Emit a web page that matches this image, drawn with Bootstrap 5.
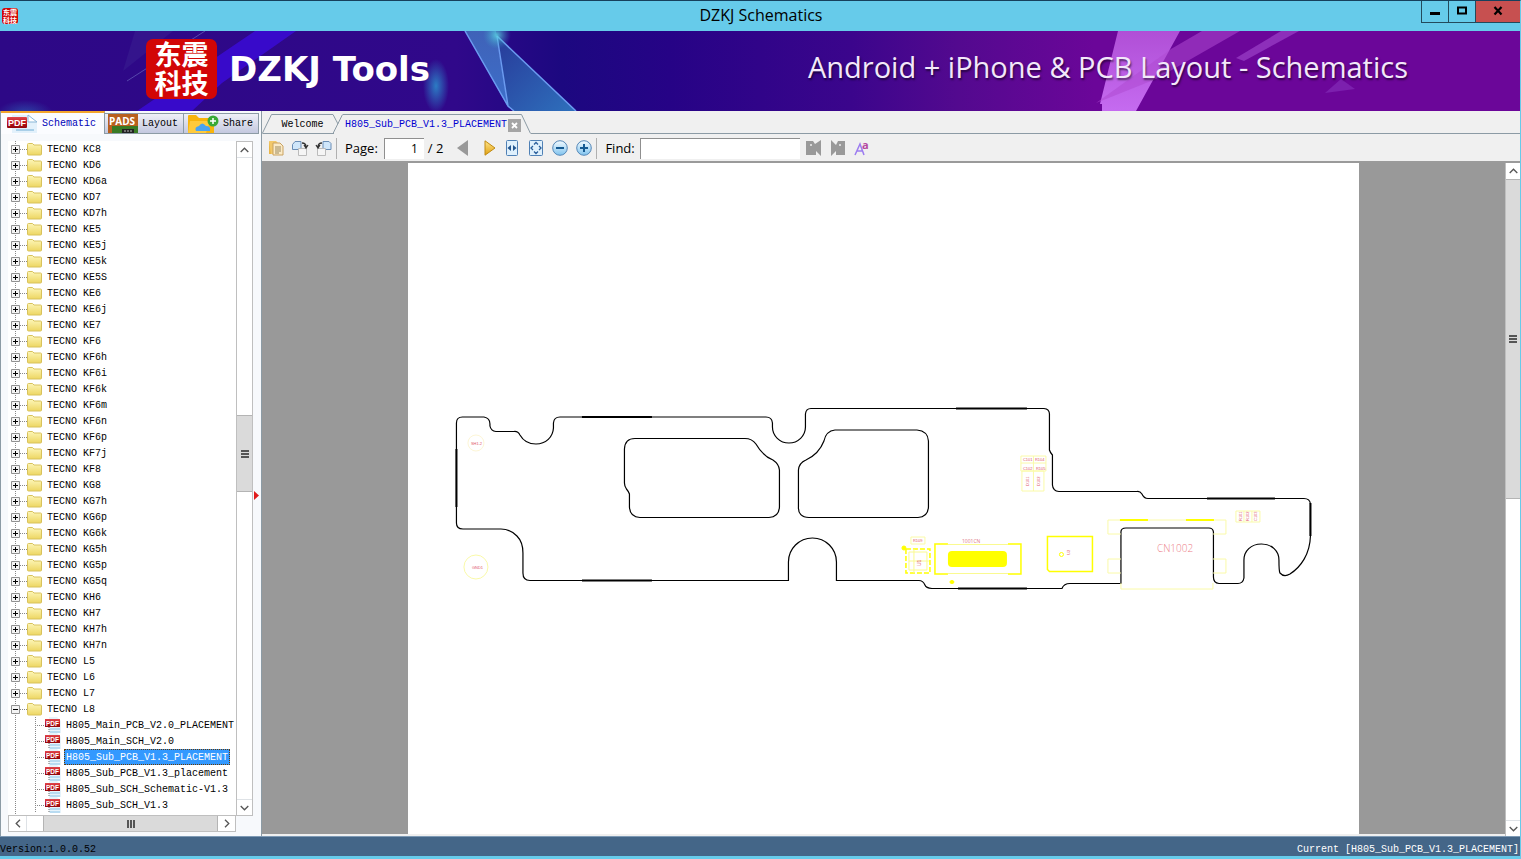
<!DOCTYPE html>
<html lang="en">
<head>
<meta charset="utf-8">
<meta name="viewport" content="width=device-width, initial-scale=1">
<title>DZKJ Schematics</title>
<link href="https://cdn.jsdelivr.net/npm/bootstrap@5.3.0/dist/css/bootstrap.min.css" rel="stylesheet">
<style>
  :root { --cyan:#66cbea; --edge:#8c9ba5; --mono:"Liberation Mono","Noto Sans CJK SC",monospace; --ui:"Open Sans","Noto Sans",sans-serif; }
  body { font:10px/16px var(--mono); color:#000; background:#f0f0f0; }
  button { font:inherit; color:inherit; background:none; border:0; padding:0; }
  .window { border-top:1px solid #16405c; border-right:1px solid var(--cyan); border-bottom:3px solid var(--cyan); }
  /* title bar */
  .titlebar { height:30px; background:var(--cyan); padding-left:2px; }
  .titlebar h1 { font:16px/28px var(--ui); }
  .side { width:100px; }
  .seal { background:#d20606; color:#fff; font-family:"Noto Sans CJK SC",sans-serif; font-weight:700; text-align:center; }
  .seal-sm { width:16px; height:16px; border-radius:3px; font-size:7px; line-height:8px; }
  .winbtns { height:22px; border:1px solid #234a5c; border-top:0; border-right:0; }
  .winbtns button { width:27px; border-right:1px solid #234a5c; }
  .winbtns button:last-child { width:44px; background:#c75050; border:0; }
  /* banner */
  .banner { height:80px; background:linear-gradient(90deg,#2d0886 0,#30088a 30%,#1c0880 37%,#260386 44%,#3b058c 56%,#53098f 63%,#6b0699 72%,#6b0699 100%); }
  .banner-content { padding:0 112px 4px 146px; }
  .seal-lg { width:71px; height:60px; border-radius:7px; font-size:27px; line-height:29px; }
  .brand { font:700 34px/40px "DejaVu Sans",sans-serif; color:#fff; margin-left:12px; }
  .slogan { font:29px/36px var(--ui); color:#f3e8fa; text-shadow:1px 2px 2px #0008; padding-bottom:4px; }
  /* side panel */
  .panel { width:262px; border-right:1px solid var(--edge); border-left:1px solid var(--edge); background:#f7f9fc; }
  .tabrow { height:23px; }
  .sidetab { height:21px; border:1px solid var(--edge); border-left:0; background:linear-gradient(#eff0f7,#c3c8df); font-size:10px; padding:0 5px 0 3px; }
  .sidetab span { padding-top:1px; }
  .sidetab.active { height:23px; width:104px; border-top:2px solid #f3a52c; border-bottom:0; background:#fbfcff; color:#0000b8; padding:0 8px 0 6px; }
  .treebox { margin:7px 8px 4px 7px; }
  .tree { background:#fff; }
  .tree li { height:16px; white-space:nowrap; background:repeating-linear-gradient(#888 0 1px,transparent 1px 2px) 7px 0/1px 100% no-repeat; padding-left:3px; }
  .tree li > * { flex-shrink:0; }
  .tree li.leaf { background:repeating-linear-gradient(#888 0 1px,transparent 1px 2px) 7px 0/1px 100% no-repeat,repeating-linear-gradient(#888 0 1px,transparent 1px 2px) 27px 0/1px 100% no-repeat; padding-left:27px; }
  .tree .toggle { width:9px; height:9px; line-height:0; }
  .dots { width:7px; height:1px; background:repeating-linear-gradient(90deg,#888 0 1px,transparent 1px 2px); }
  .leaf .dots { width:10px; }
  .tree .label { padding:2px 2px 0; margin-left:3px; line-height:14px; }
  .leaf .label { margin-left:2px; }
  .label.sel { background:#3399ff; color:#fff; outline:1px dotted #6b3a00; outline-offset:-1px; }
  /* scrollbars */
  .sb { background:#fff; border:1px solid #bfbfbf; }
  .sb-v { width:17px; }
  .sb-v button, .sb-v .thumb { width:100%; display:flex; align-items:center; justify-content:center; }
  .sb-v button { height:16px; }
  .sb-v .thumb { background:#dadada; border:1px solid #b4b4b4; border-width:1px 0; }
  .sb-h { height:17px; }
  .sb-h button { width:17px; }
  .sb-h .thumb { background:#dadada; border:1px solid #b4b4b4; border-width:0 1px; }
  /* documents */
  .doctabs { height:23px; }
  .doctabs .line { border-bottom:1px solid var(--edge); }
  .doctabs button { border-top:1px solid var(--edge); height:20px; white-space:nowrap; padding-top:1px; }
  .doctabs .first { width:61px; border-bottom:1px solid var(--edge); }
  .doctabs .current { width:178px; color:#0000d0; padding-left:2px; }
  .overlap { margin-left:-6px; }
  .close-x { width:13px; height:13px; background:#a5a5a5; }
  .toolbar { height:29px; border-bottom:2px solid #9a9a9a; padding:1px 0 0 2px; font:13px/20px var(--ui); }
  .toolbar > button { width:24px; height:20px; line-height:0; }
  .toolbar > .next { width:21px; }
  .toolbar input { height:21px; border:1px solid #8f8f8f; border-right:0; border-bottom:0; background:#fff; padding:0 6px; font:12px/18px var(--ui); border-radius:0; }
  .sep { width:1px; height:21px; background:#b0b0b0; }
  .pageno { width:40px; text-align:right; margin:0 4px 0 6px; }
  .find { width:160px; margin:0 2px 0 5px; }
  .canvas { background:#999; margin-bottom:2px; }
  .sheet { width:76.5%; background:#fff; }
  .sb-doc { width:15px; border-width:0 0 0 1px; }
  .sb-doc .thumb { height:320px; }
  .track-a { flex:258 0 0; } .thumb-a { flex:76 0 0; } .track-b { flex:308 0 0; }
  .arrowcol { width:0; position:relative; }
  .status { height:20px; background:#446688; border-top:1px solid #7e9ab5; padding:6px 1px 0 0; line-height:13px; }
</style>
</head>
<body>
<svg class="position-absolute" width="0" height="0" aria-hidden="true">
  <linearGradient id="gFolder" x2="0" y2="1"><stop stop-color="#fdf6b8"/><stop offset="1" stop-color="#edd662"/></linearGradient>
  <linearGradient id="gRed" x2="0" y2="1"><stop stop-color="#e0474d"/><stop offset=".5" stop-color="#c1151c"/><stop offset="1" stop-color="#8f070c"/></linearGradient>
  <linearGradient id="gGold" x2="0" y2="1"><stop stop-color="#ffe58a"/><stop offset="1" stop-color="#e0a010"/></linearGradient>
  <linearGradient id="gBlue" x2="0" y2="1"><stop stop-color="#f4fbff"/><stop offset="1" stop-color="#7fc3ee"/></linearGradient>
  <symbol id="folder" viewBox="0 0 15 14"><path d="M.5 2.500q0-1 1-1h4l1.500 1.500h6.500q1 0 1 1v8q0 1-1 1h-12q-1 0-1-1z" fill="url(#gFolder)" stroke="#d8c25c"/></symbol>
  <symbol id="pdf" viewBox="0 0 17 16"><path d="M4 0h8l4 4v12H4z" fill="#e6f3fb"/><path d="M5 12h10M5 15h10" stroke="#a9d4ee" stroke-width="1.500"/><path d="M4 10v6" stroke="#666" stroke-dasharray="1 1"/><rect y="2" width="15" height="8" fill="url(#gRed)"/><text x="1" y="8.500" font-size="6.500" font-weight="700" font-family="Liberation Sans" fill="#fff">PDF</text></symbol>
  <symbol id="up" viewBox="0 0 9 6"><path d="M.7 5 4.500 1.200 8.300 5" fill="none" stroke="#555" stroke-width="1.300"/></symbol>
  <symbol id="down" viewBox="0 0 9 6"><path d="M.7 1 4.500 4.800 8.300 1" fill="none" stroke="#555" stroke-width="1.300"/></symbol>
  <symbol id="grip" viewBox="0 0 8 8"><path d="M0 1h8M0 4h8M0 7h8" stroke="#555" stroke-width="2"/></symbol>
</svg>

<div class="window vh-100 d-flex flex-column overflow-hidden">
  <header class="titlebar d-flex justify-content-between flex-shrink-0">
    <div class="side d-flex align-items-center"><div class="seal seal-sm">东震<br>科技</div></div>
    <h1 class="m-0">DZKJ Schematics</h1>
    <div class="side d-flex justify-content-end align-items-start">
      <div class="winbtns d-flex">
        <button aria-label="Minimize"><svg width="12" height="12"><path d="M1 8.500h10" stroke="#000" stroke-width="3"/></svg></button>
        <button aria-label="Maximize"><svg width="12" height="12"><path d="M2 2.500h8v6H2z" fill="none" stroke="#000" stroke-width="2"/></svg></button>
        <button aria-label="Close"><svg width="12" height="12"><path d="M2.500 2 9.500 9.500M9.500 2 2.500 9.500" stroke="#000" stroke-width="2.200"/></svg></button>
      </div>
    </div>
  </header>

  <div class="banner position-relative flex-shrink-0">
    <svg class="position-absolute top-0 start-0 w-100 h-100" viewBox="0 0 1520 80" preserveAspectRatio="none" aria-hidden="true">
      <defs>
        <linearGradient id="ray" x2="0" y2="1"><stop stop-color="#3f62b8"/><stop offset="1" stop-color="#3d6fca"/></linearGradient>
        <linearGradient id="ray2" x2="1" y2="1"><stop stop-color="#283a9a"/><stop offset="1" stop-color="#2e70bc"/></linearGradient>
        <linearGradient id="pink" x2="0" y2="1"><stop stop-color="#b04fd6"/><stop offset="1" stop-color="#c56bf0"/></linearGradient>
        <radialGradient id="glow"><stop stop-color="#2c7cc4"/><stop offset="1" stop-color="#2c7cc4" stop-opacity="0"/></radialGradient>
        <radialGradient id="star"><stop stop-color="#5ee0e8"/><stop offset="1" stop-color="#3aa0c8" stop-opacity="0"/></radialGradient>
      </defs>
      <path d="M255 0h41L222 52l-30 28h-55z" fill="#3c0be0" opacity=".75"/>
      <path d="M135 0h38l-50 40z" fill="#3f2a94" opacity=".35"/>
      <path d="M205 0 127 50" stroke="#5748ac"/>
      <ellipse cx="436" cy="55" rx="13" ry="27" fill="url(#glow)"/>
      <ellipse cx="25" cy="82" rx="28" ry="13" fill="url(#glow)" opacity=".5"/>
      <path d="M465 0h31l12 76z" fill="url(#ray)"/>
      <path d="M497 5 576 80h-62l-6-4z" fill="url(#ray2)"/>
      <path d="M465 0 508 75 514 80M497 5 508 75M497 5 576 80" fill="none" stroke="#6b9bf0" stroke-width="1.500"/>
      <circle cx="497" cy="4" r="14" fill="url(#star)" opacity=".8"/>
      <path d="M1118 0h62l-44 80h-34v-7h-2z" fill="url(#pink)"/>
      <path d="M1202 0h38l-84 48-60 24 75-54z" fill="#ae4bd2" opacity=".55"/>
      <path d="M1281 0h18l-55 30-8-3z" fill="#8d2fba"/>
      <path d="m1341 48 14 10-30 4z" fill="#7c20ae"/>
    </svg>
    <div class="banner-content position-relative h-100 d-flex align-items-center">
      <div class="seal seal-lg">东震<br>科技</div>
      <div class="brand">DZKJ Tools</div>
      <div class="slogan ms-auto text-nowrap">Android + iPhone &amp; PCB Layout - Schematics</div>
    </div>
  </div>

  <main class="d-flex flex-grow-1 overflow-hidden">
    <aside class="panel d-flex flex-column flex-shrink-0">
      <div class="tabrow d-flex align-items-end" role="tablist">
        <button class="sidetab active d-flex align-items-center justify-content-between" role="tab">
          <svg width="32" height="19"><path d="M5 1h17l8 8v11H5z" fill="#e3f1fb"/><path d="M21 1v7h9z" fill="#fff" stroke="#8bb8d8"/><path d="M9 16h18" stroke="#a9cfe8" stroke-width="2"/><rect y="3" width="20" height="11" rx="1" fill="url(#gRed)"/><text x="1" y="12" font-size="9" font-weight="700" font-family="Liberation Sans" fill="#fff">PDF</text></svg>
          <span>Schematic</span></button>
        <button class="sidetab d-flex align-items-center gap-1" role="tab">
          <svg width="30" height="19"><path d="M0 0h30v19H0z" fill="#b8601e"/><path d="M4 12h26v7H4z" fill="#397a24"/><path d="M14 15h12v4H14z" fill="#222"/><path d="M16 17h8" stroke="#bbb" stroke-dasharray="2 1"/><text x="1" y="11" font-size="10" font-weight="700" font-family="Open Sans" fill="#fff">PADS</text></svg>
          <span>Layout</span></button>
        <button class="sidetab d-flex align-items-center gap-1" role="tab">
          <svg width="32" height="19"><path d="M1 2q0-1 1-1h7l3 3h15v15H1z" fill="#f8b40c"/><path d="M3 7h20l-4 12H1z" fill="#ffca3a"/><path d="M9 17q-2-4 3-5 3-5 7 0 5 0 4 5z" fill="#4aa3ef"/><circle cx="26" cy="7" r="5.500" fill="#39a935"/><path d="M26 4v6M23 7h6" stroke="#fff" stroke-width="1.500"/></svg>
          <span>Share</span></button>
      </div>
      <div class="treebox d-flex flex-grow-1 overflow-hidden">
        <div class="d-flex flex-column flex-grow-1 overflow-hidden">
          <ul class="tree list-unstyled m-0 flex-grow-1 overflow-hidden" id="tree"></ul>
          <div class="sb sb-h d-flex flex-shrink-0">
            <button aria-label="Scroll left"><svg width="6" height="9"><path d="M5 .7 1.200 4.500 5 8.300" fill="none" stroke="#555" stroke-width="1.300"/></svg></button>
            <div class="border-start px-2"></div>
            <div class="thumb flex-grow-1 d-flex align-items-center justify-content-center"><svg width="8" height="8"><path d="M1 0v8M4 0v8M7 0v8" stroke="#555" stroke-width="2"/></svg></div>
            <button aria-label="Scroll right"><svg width="6" height="9"><path d="M1 .7 4.800 4.500 1 8.300" fill="none" stroke="#555" stroke-width="1.300"/></svg></button>
          </div>
        </div>
        <div class="sb sb-v d-flex flex-column flex-shrink-0 mb-3">
          <button class="border-bottom" aria-label="Scroll up"><svg width="9" height="6"><use href="#up"/></svg></button>
          <div class="track-a"></div>
          <div class="thumb thumb-a"><svg width="8" height="8"><use href="#grip"/></svg></div>
          <div class="track-b"></div>
          <button class="border-top" aria-label="Scroll down"><svg width="9" height="6"><use href="#down"/></svg></button>
        </div>
      </div>
    </aside>
    <div class="arrowcol d-flex align-items-center"><svg class="position-absolute end-100" width="8" height="60"><path d="M0 47v9l5-4.500z" fill="#e01b1b"/></svg></div>

    <section class="d-flex flex-column flex-grow-1 overflow-hidden">
      <div class="doctabs d-flex align-items-end">
        <svg width="10" height="20"><path d="M0 19.500.5 19 9.500.5H10M.5 19.500H10" fill="none" stroke="#8c9ba5"/></svg>
        <button class="first">Welcome</button>
        <svg width="6" height="20"><path d="M0 .5 5 10M0 19.500h1" fill="none" stroke="#8c9ba5"/></svg>
        <svg class="overlap" width="10" height="20"><path d="M0 19.500 9.500.5" fill="none" stroke="#8c9ba5"/></svg>
        <button class="current d-flex align-items-center justify-content-between">
          <span>H805_Sub_PCB_V1.3_PLACEMENT</span>
          <span class="close-x d-flex"><svg width="13" height="13"><path d="m4 4 5 5m0-5-5 5" stroke="#fff" stroke-width="1.800"/></svg></span>
        </button>
        <svg width="10" height="20"><path d="M0 .5h.5L9.500 19.500" fill="none" stroke="#8c9ba5"/></svg>
        <div class="line flex-grow-1"></div>
      </div>

      <div class="toolbar d-flex align-items-center flex-shrink-0">
        <button aria-label="Open"><svg width="16" height="16"><path d="M1 2h5v12H1z" fill="#e9b64a"/><path d="M1 1h7l2 2v11H3z" fill="#f2c86a"/><path d="M5 3h7l3 3v9H5z" fill="#fbeac6" stroke="#c9a260"/><path d="M7 7h6M7 9h6M7 11h6M7 13h4" stroke="#9b8a60"/></svg></button>
        <button aria-label="Rotate right"><svg width="18" height="16"><path d="M1.500 4.500 4 1.500h6v8H1.500z" fill="#cfe6fa" stroke="#6a8db5"/><path d="M7.500 8.500h8v7h-8z" fill="#f5f5f5" stroke="#bbb"/><path d="M11 3q4 0 4 4M13 5l2 3 2-3" fill="none" stroke="#333" stroke-width="1.300"/></svg></button>
        <button aria-label="Rotate left"><svg width="18" height="16"><path d="M8 1.500h6l2 2v6H8z" fill="#cfe6fa" stroke="#6a8db5"/><path d="M2.500 8.500h8v7h-8z" fill="#f5f5f5" stroke="#bbb"/><path d="M7 3Q3 3 3 7M1 5l2 3 2-3" fill="none" stroke="#333" stroke-width="1.300"/></svg></button>
        <span class="sep"></span>
        <label class="ps-2" for="pageno">Page:</label>
        <input class="pageno" id="pageno" value="1"><span>/ 2</span>
        <button class="ms-2" aria-label="Previous page"><svg width="12" height="16"><path d="M11 0v16L0 8z" fill="#999"/></svg></button>
        <button class="next ms-1" aria-label="Next page"><svg width="12" height="16"><path d="M1 .8v14.400L11 8z" fill="url(#gGold)" stroke="#c08a14"/></svg></button>
        <button aria-label="Fit width"><svg width="12" height="16"><rect x=".5" y=".5" width="11" height="15" rx="1" fill="#dff0fc" stroke="#4f80b5"/><path d="M5 5v6L1.500 8zM7 5v6l3.500-3z" fill="#24568f"/></svg></button>
        <button aria-label="Fit page"><svg width="14" height="16"><rect x=".5" y=".5" width="13" height="15" rx="1" fill="#dff0fc" stroke="#4f80b5"/><path d="M5 4.500 7 2.500l2 2M5 11.500 7 13.500l2-2M4 6 2 8l2 2M10 6l2 2-2 2" fill="none" stroke="#2b5f9b" stroke-width="1.300"/></svg></button>
        <button aria-label="Zoom out"><svg width="16" height="16"><circle cx="8" cy="8" r="7.300" fill="url(#gBlue)" stroke="#5688b8"/><path d="M4 8h8" stroke="#155a92" stroke-width="2"/></svg></button>
        <button aria-label="Zoom in"><svg width="16" height="16"><circle cx="8" cy="8" r="7.300" fill="url(#gBlue)" stroke="#5688b8"/><path d="M4 8h8M8 4v8" stroke="#155a92" stroke-width="2"/></svg></button>
        <span class="sep"></span>
        <label class="ps-2" for="find">Find:</label>
        <input class="find" id="find">
        <button aria-label="Find previous"><svg width="16" height="16"><path d="M0 1h7l2 3 6-4v16l-5-5v4H0z" fill="#999"/><circle cx="5" cy="5" r="1" fill="#eee"/></svg></button>
        <button aria-label="Find next"><svg width="16" height="16"><path d="M15 1H8L6 5 1 0v16l5-5v4h9z" fill="#999"/><circle cx="10" cy="5" r="1" fill="#eee"/></svg></button>
        <button aria-label="Match case"><svg width="18" height="20"><path d="M2 17 7 6l4 11M4 13h6" fill="none" stroke="#9c7cf0" stroke-width="1.500"/><text x="9" y="11" font-size="11" font-weight="700" font-family="Open Sans" fill="#b5489f">a</text></svg></button>
      </div>

      <div class="d-flex flex-grow-1 overflow-hidden">
        <div class="canvas flex-grow-1 d-flex justify-content-center overflow-hidden">
          <div class="sheet h-100">
            <svg class="w-100 h-100 d-block" viewBox="408 163 951 671" preserveAspectRatio="xMidYMin slice" role="img" aria-label="Board placement drawing">
              <g fill="none" stroke="#000" stroke-width="1.200">
                <path d="M462.500 417H484Q490 418 490 424V426Q491 431 496 431.500H514Q518 431 520 435C524 442 530 444 536 444C546 444 553 437 553.500 428V423Q554 417 560 417H766Q772 417 772.500 423V427A16.500 16 0 0 0 805.500 427V414Q806 408.500 811 408.500H1044Q1049.500 409 1049.500 414V450Q1050 452 1052.500 455V485Q1053 491 1059 491.500H1137Q1140 491 1142 494Q1144 498.500 1148 498.500H1304Q1310 498.500 1310.500 504V536C1310 554 1301 567 1290 574Q1284 577.500 1280 573Q1279 571 1279 560C1279 551 1272 544 1261.500 544C1251 544 1244 551 1244 560V578Q1243 583.500 1238 583.500H1219Q1213.500 583 1213.500 577V532Q1213 528 1209 528H1126Q1121 528 1121 532V583.500H1070Q1064 583.500 1062 588.500H932Q926 588 925 585Q923 580.500 919 580.500H836.500V562A24 24 0 0 0 788.500 562V580.500H530Q523 580.500 523 573V553Q523 542 517 536Q510 529 501 529H463Q456.500 529 456.500 523V423Q456.500 417 462.500 417Z"/>
                <path d="M635 438.500H745Q752 438.500 756 444Q763 456 773 460Q779 464 779.500 470V507Q779 517 769 517.500H640Q630 517 629.500 507V494Q629 492 626.500 489Q624.500 486 624.500 483V449Q625 438.500 635 438.500Z"/>
                <path d="M835 430H917Q928 431 928.500 441V507Q928 517 918 517.500H809Q798 517 798.500 507V470Q799 463 806 460Q819 454 824 441Q826 431 835 430Z"/>
                <path d="M582 417h70M582 580.500h70M456.500 449v58M956 408.500h71M958 588.500h69M1207 498.500h68M1310.500 503v33" stroke-width="2"/>
              </g>
              <g fill="none" stroke="#fafaa8">
                <circle cx="476" cy="443" r="8" stroke="#fdf6d6"/><circle cx="476" cy="567" r="12"/>
                <path d="M1021 456h25v15h-25zM1021 463h25M1022 471h22v20h-22zM1033.500 456v35M1236 511h24v11h-24zM1244 511v11M1252 511v11M1108 520h118v14M1108 520v14h13M1226 534h-13M1108 559h13M1108 559v14h13M1213 559h13v14h-13M1121 583v6h92v-6M911 537h14v7h-14z"/>
              </g>
              <g fill="none" stroke="#ff0">
                <path d="M1047.500 536.500h45v35h-43l-2-2z" stroke-width="1.500"/>
                <circle cx="1061.500" cy="554.500" r="2"/>
                <path d="M1120 520h28M1186 520h28" stroke-width="2"/>
                <path d="M948 544h-13v30h13M1008 544h13v30h-13" stroke-width="1.500"/><path d="M948 544.500h60M948 573.500h60" stroke="#fafa90"/>
                <path d="M906 549h24v24h-24z" stroke-width="1.500" stroke-dasharray="5 2"/><path d="M909 552h18v18h-18zM914 549v24M909 561h20" stroke="#fafa90"/>
                <circle cx="904" cy="548" r="2" fill="#ff0"/><ellipse cx="952" cy="582" rx="2" ry="1.500" fill="#ff0"/>
              </g>
              <rect x="948" y="551" width="59" height="16" rx="4" fill="#ff0"/>
              <g fill="#e0566a" font-family="Liberation Sans" font-size="4">
                <text x="471" y="445">SH1.2</text><text x="472" y="569">GND1</text>
                <text x="1023" y="461">C101</text><text x="1035" y="461">R104</text><text x="1023" y="470">C102</text><text x="1036" y="470">R105</text>
                <text transform="translate(1029 486) rotate(-90)">D101</text><text transform="translate(1040 486) rotate(-90)">D102</text>
                <text transform="translate(1242 521) rotate(-90)">R101</text><text transform="translate(1249 521) rotate(-90)">R102</text><text transform="translate(1257 521) rotate(-90)">C103</text>
                <text transform="translate(1070 555) rotate(-90)">U2</text><text x="913" y="542">R109</text><text transform="translate(921 566) rotate(-90)" font-size="5">U1</text>
              </g>
              <text x="962" y="543" font-family="Open Sans" font-size="5" fill="#e07a86">1001CN</text>
              <text x="1157" y="552" font-family="Open Sans" font-weight="300" font-size="10" fill="#ec8088">CN1002</text>
            </svg>
          </div>
        </div>
        <div class="sb sb-v sb-doc d-flex flex-column flex-shrink-0">
          <button aria-label="Scroll up"><svg width="9" height="6"><use href="#up"/></svg></button>
          <div class="thumb"><svg width="8" height="8"><use href="#grip"/></svg></div>
          <div class="flex-grow-1"></div>
          <button class="border-top" aria-label="Scroll down"><svg width="9" height="6"><use href="#down"/></svg></button>
        </div>
      </div>
    </section>
  </main>

  <footer class="status d-flex justify-content-between flex-shrink-0">
    <span>Version:1.0.0.52</span><span class="text-white">Current [H805_Sub_PCB_V1.3_PLACEMENT]</span>
  </footer>
</div>

<script src="https://cdn.jsdelivr.net/npm/bootstrap@5.3.0/dist/js/bootstrap.bundle.min.js"></script>
<script>
  const models = "KC8 KD6 KD6a KD7 KD7h KE5 KE5j KE5k KE5S KE6 KE6j KE7 KF6 KF6h KF6i KF6k KF6m KF6n KF6p KF7j KF8 KG8 KG7h KG6p KG6k KG5h KG5p KG5q KH6 KH7 KH7h KH7n L5 L6 L7 L8".split(" ");
  const files = ["H805_Main_PCB_V2.0_PLACEMENT", "H805_Main_SCH_V2.0", "H805_Sub_PCB_V1.3_PLACEMENT", "H805_Sub_PCB_V1.3_placement", "H805_Sub_SCH_Schematic-V1.3", "H805_Sub_SCH_V1.3"];
  const box = open => `<svg width="9" height="9"><path d="M.5.5h8v8h-8z" fill="#f4f4f4" stroke="#919191"/><path d="M2 4.500h5${open ? "" : "M4.500 2v5"}" stroke="#000"/></svg>`;
  const folder = name => `<li class="d-flex align-items-center"><button class="toggle" aria-label="Toggle">${box(name === "L8")}</button><span class="dots"></span><svg width="15" height="14"><use href="#folder"/></svg><span class="label">${name ? "TECNO " + name : ""}</span></li>`;
  const leaf = name => `<li class="leaf d-flex align-items-center"><span class="dots"></span><svg width="17" height="16"><use href="#pdf"/></svg><span class="label${name === files[2] ? " sel" : ""}">${name}</span></li>`;
  document.getElementById("tree").innerHTML = models.map(folder).join("") + files.map(leaf).join("") + folder("");
</script>
</body>
</html>
